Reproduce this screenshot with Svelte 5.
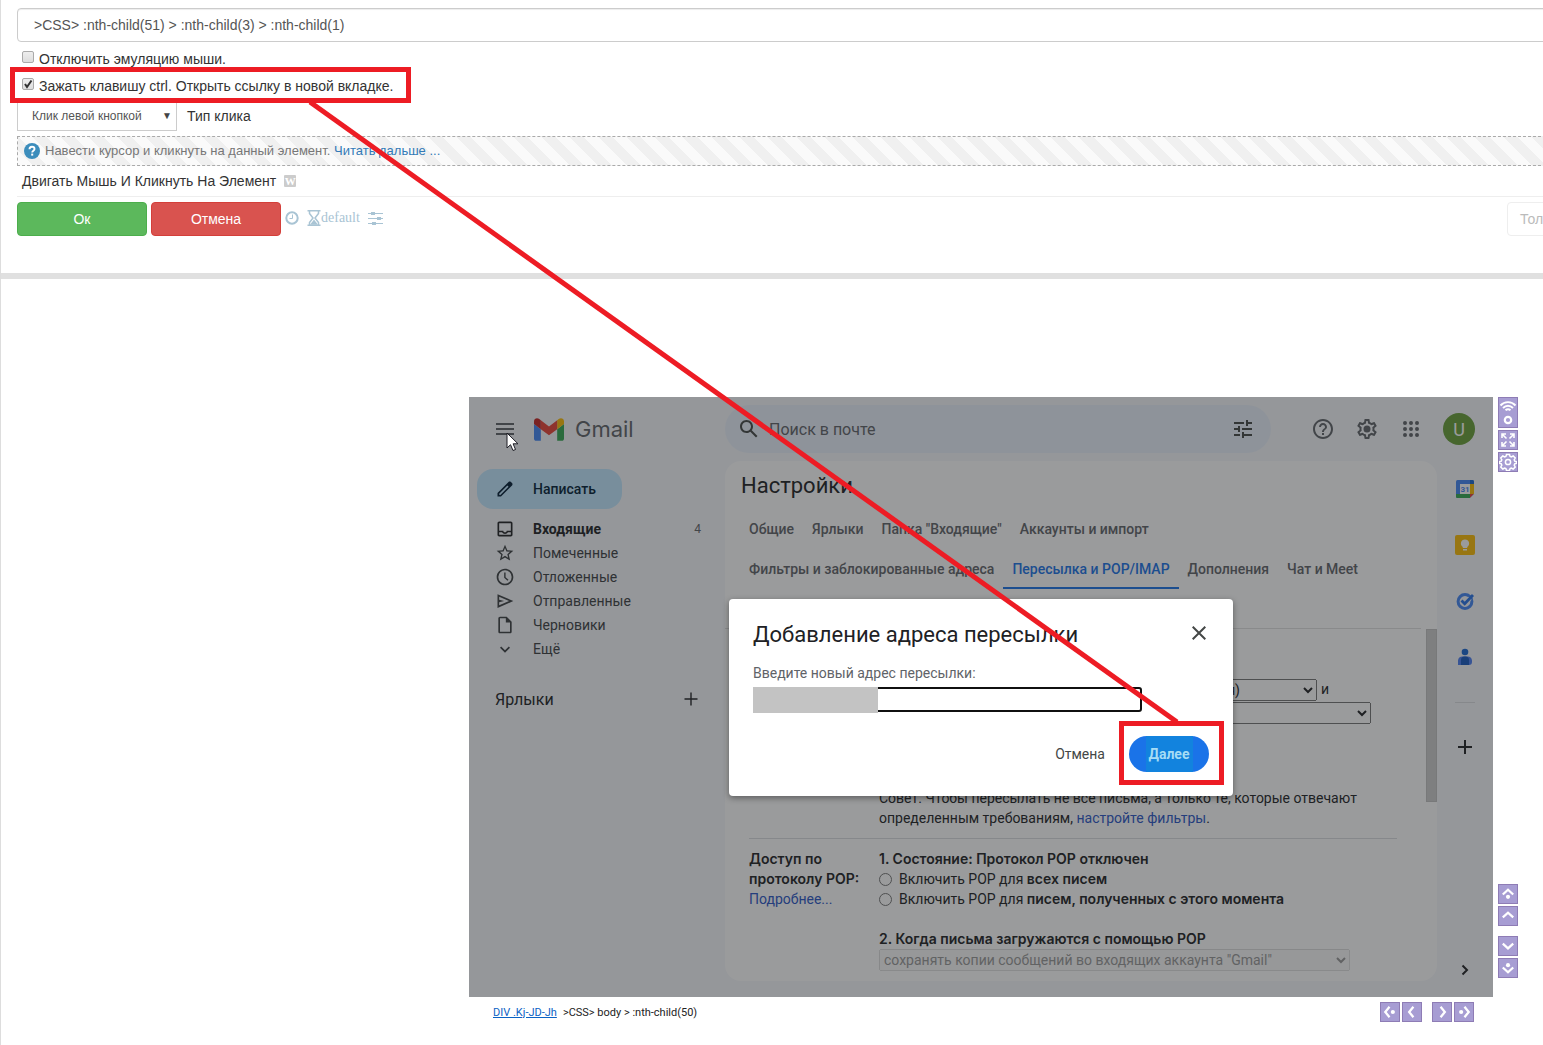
<script>
  let selector = $state('>CSS> :nth-child(51) > :nth-child(3) > :nth-child(1)');
  let noMouse = $state(false);
  let holdCtrl = $state(true);
  let address = $state('');

  const icons = {
    menu: 'M3 18h18v-2H3v2zm0-5h18v-2H3v2zm0-7v2h18V6H3z',
    search: 'M20.49 19l-5.73-5.73C15.53 12.2 16 10.91 16 9.5 16 5.91 13.09 3 9.5 3S3 5.91 3 9.5 5.91 16 9.5 16c1.41 0 2.7-.47 3.77-1.24L19 20.49 20.49 19zM5 9.5C5 7.01 7.01 5 9.5 5S14 7.01 14 9.5 11.99 14 9.5 14 5 11.99 5 9.5z',
    tune: 'M3 17v2h6v-2H3zM3 5v2h10V5H3zm10 16v-2h8v-2h-8v-2h-2v6h2zM7 9v2H3v2h4v2h2V9H7zm14 4v-2H11v2h10zm-6-4h2V7h4V5h-4V3h-2v6z',
    help: 'M11 18h2v-2h-2v2zm1-16C6.48 2 2 6.48 2 12s4.48 10 10 10 10-4.48 10-10S17.52 2 12 2zm0 18c-4.41 0-8-3.59-8-8s3.59-8 8-8 8 3.59 8 8-3.59 8-8 8zm0-14c-2.21 0-4 1.79-4 4h2c0-1.1.9-2 2-2s2 .9 2 2c0 2-3 1.75-3 5h2c0-2.25 3-2.5 3-5 0-2.21-1.79-4-4-4z',
    gear: 'M19.43 12.98c.04-.32.07-.64.07-.98 0-.34-.03-.66-.07-.98l2.11-1.65c.19-.15.24-.42.12-.64l-2-3.46c-.09-.16-.26-.25-.44-.25-.06 0-.12.01-.17.03l-2.49 1c-.52-.4-1.08-.73-1.69-.98l-.38-2.65C14.46 2.18 14.25 2 14 2h-4c-.25 0-.46.18-.49.42l-.38 2.65c-.61.25-1.17.59-1.69.98l-2.49-1c-.06-.02-.12-.03-.18-.03-.17 0-.34.09-.43.25l-2 3.46c-.13.22-.07.49.12.64l2.11 1.65c-.04.32-.07.65-.07.98 0 .33.03.66.07.98l-2.11 1.65c-.19.15-.24.42-.12.64l2 3.46c.09.16.26.25.44.25.06 0 .12-.01.17-.03l2.49-1c.52.4 1.08.73 1.69.98l.38 2.65c.03.24.24.42.49.42h4c.25 0 .46-.18.49-.42l.38-2.65c.61-.25 1.17-.59 1.69-.98l2.49 1c.06.02.12.03.18.03.17 0 .34-.09.43-.25l2-3.46c.12-.22.07-.49-.12-.64l-2.11-1.65zm-1.98-1.71c.04.31.05.52.05.73 0 .21-.02.43-.05.73l-.14 1.13.89.7 1.08.84-.7 1.21-1.27-.51-1.04-.42-.9.68c-.43.32-.84.56-1.25.73l-1.06.43-.16 1.13-.2 1.35h-1.4l-.19-1.35-.16-1.13-1.06-.43c-.43-.18-.83-.41-1.23-.71l-.91-.7-1.06.43-1.27.51-.7-1.21 1.08-.84.89-.7-.14-1.13c-.03-.31-.05-.54-.05-.74s.02-.43.05-.73l.14-1.13-.89-.7-1.08-.84.7-1.21 1.27.51 1.04.42.9-.68c.43-.32.84-.56 1.25-.73l1.06-.43.16-1.13.2-1.35h1.39l.19 1.35.16 1.13 1.06.43c.43.18.83.41 1.23.71l.91.7 1.06-.43 1.27-.51.7 1.21-1.07.85-.89.7.14 1.13zM12 8.5a3.5 3.5 0 1 0 0 7 3.5 3.5 0 0 0 0-7z',
    apps: 'M6 8a2 2 0 1 0 0-4 2 2 0 0 0 0 4zm6 0a2 2 0 1 0 0-4 2 2 0 0 0 0 4zm6 0a2 2 0 1 0 0-4 2 2 0 0 0 0 4zM6 14a2 2 0 1 0 0-4 2 2 0 0 0 0 4zm6 0a2 2 0 1 0 0-4 2 2 0 0 0 0 4zm6 0a2 2 0 1 0 0-4 2 2 0 0 0 0 4zM6 20a2 2 0 1 0 0-4 2 2 0 0 0 0 4zm6 0a2 2 0 1 0 0-4 2 2 0 0 0 0 4zm6 0a2 2 0 1 0 0-4 2 2 0 0 0 0 4z',
    pencil: 'M20.41 4.94l-1.35-1.35c-.78-.78-2.05-.78-2.83 0L3 16.82V21h4.18L20.41 7.77c.79-.78.79-2.05 0-2.83zm-14 14.12L5 19v-1.36l9.82-9.82 1.41 1.41-9.82 9.83z',
    inbox: 'M19 3H5c-1.1 0-2 .9-2 2v14c0 1.1.9 2 2 2h14c1.1 0 2-.9 2-2V5c0-1.1-.9-2-2-2zM5 19v-3h3.56c.69 1.19 1.97 2 3.45 2s2.75-.81 3.45-2H19v3H5zm14-5h-4.99c0 1.1-.9 2-2 2s-2-.9-2-2H5V5h14v9z',
    star: 'M22 9.24l-7.19-.62L12 2 9.19 8.63 2 9.24l5.46 4.73L5.82 21 12 17.27 18.18 21l-1.63-7.03L22 9.24zM12 15.4l-3.76 2.27 1-4.28-3.32-2.88 4.38-.38L12 6.1l1.71 4.04 4.38.38-3.32 2.88 1 4.28L12 15.4z',
    clock: 'M11.99 2C6.47 2 2 6.48 2 12s4.47 10 9.99 10C17.52 22 22 17.52 22 12S17.52 2 11.99 2zM12 20a8 8 0 1 1 0-16 8 8 0 0 1 0 16zM12.7 6.5H11V13l4 3.6 1.2-1.3-3.5-3.1V6.5z',
    send: 'M3 4v16.5L22 12 3 4zm2 12v-2.5l6-1.5-6-1.5V7l11.9 5L5 17.2V16z',
    draft: 'M14 2H6c-1.1 0-2 .9-2 2v16c0 1.1.9 2 2 2h12c1.1 0 2-.9 2-2V8l-6-6zM6 20V4h7v5h5v11H6z',
    more: 'M12 16.4l-6-6L7.4 9l4.6 4.6L16.6 9l1.4 1.4-6 6z'
  };

  const folders = [
    { label: 'Входящие', icon: icons.inbox, count: 4, bold: true },
    { label: 'Помеченные', icon: icons.star },
    { label: 'Отложенные', icon: icons.clock },
    { label: 'Отправленные', icon: icons.send },
    { label: 'Черновики', icon: icons.draft },
    { label: 'Ещё', icon: icons.more }
  ];

  const tabRows = [
    ['Общие', 'Ярлыки', 'Папка "Входящие"', 'Аккаунты и импорт'],
    ['Фильтры и заблокированные адреса', 'Пересылка и POP/IMAP', 'Дополнения', 'Чат и Meet']
  ];
  let activeTab = $state('Пересылка и POP/IMAP');

  // chevron + optional dot for the scroll buttons round the screen
  const vertical = [
    { name: 'В начало', d: 'M4 10l5.5-5 5.5 5', dot: [9.5, 12.5] },
    { name: 'Вверх', d: 'M4 11l5.5-5 5.5 5' },
    { name: 'Вниз', d: 'M4 7l5.5 5 5.5-5', gap: true },
    { name: 'В конец', d: 'M4 9l5.5 5 5.5-5', dot: [9.5, 6.5] }
  ];
  const horizontal = [
    { name: 'Влево до края', d: 'M9 4L4.5 9.5 9 15', dot: [12.5, 9.5] },
    { name: 'Влево', d: 'M11 4L6.5 9.5 11 15' },
    { name: 'Вправо', d: 'M8 4l4.5 5.5L8 15', gap: true },
    { name: 'Вправо до края', d: 'M10 4l4.5 5.5L10 15', dot: [6.5, 9.5] }
  ];
</script>

{#snippet icon(d, size = 20)}
  <svg class="icon" width={size} height={size} viewBox="0 0 24 24" aria-hidden="true"><path {d} /></svg>
{/snippet}

{#snippet padButton(b)}
  <button class="pad" class:gap={b.gap} aria-label={b.name}>
    <svg width="18" height="18" viewBox="0 0 19 19">
      <path d={b.d} fill="none" stroke="#fff" stroke-width="2.4" />
      {#if b.dot}<circle cx={b.dot[0]} cy={b.dot[1]} r="2.2" fill="#fff" />{/if}
    </svg>
  </button>
{/snippet}

<div class="page">
  <section class="action">
    <input class="selector" type="text" aria-label="Селектор" bind:value={selector} />

    <label class="check">
      <span class="tick">
        <input type="checkbox" bind:checked={noMouse} />
        {#if noMouse}<svg viewBox="0 0 12 12"><path d="M3 6l2 3 4.5-6.5" /></svg>{/if}
      </span>
      Отключить эмуляцию мыши.
    </label>
    <label class="check">
      <span class="tick">
        <input type="checkbox" bind:checked={holdCtrl} />
        {#if holdCtrl}<svg viewBox="0 0 12 12"><path d="M3 6l2 3 4.5-6.5" /></svg>{/if}
      </span>
      Зажать клавишу ctrl. Открыть ссылку в новой вкладке.
    </label>

    <div class="click-type">
      <span class="select-wrap">
        <select id="click-type"><option>Клик левой кнопкой</option></select>
        <span class="arrow">▼</span>
      </span>
      <label for="click-type">Тип клика</label>
    </div>

    <div class="hint">
      <svg width="16" height="16" viewBox="0 0 16 16" aria-hidden="true">
        <circle cx="8" cy="8" r="8" fill="#3c8dbc" />
        <path d="M5.5 6.3C5.5 4.5 6.6 3.7 8 3.7s2.5.8 2.5 2.2c0 1.7-2.3 1.8-2.3 3.6" fill="none" stroke="#fff" stroke-width="1.9" />
        <rect x="7.2" y="10.6" width="2" height="2" fill="#fff" />
      </svg>
      <span>Навести курсор и кликнуть на данный элемент. <a href="#more">Читать дальше ...</a></span>
    </div>

    <div class="name">
      Двигать Мышь И Кликнуть На Элемент
      <span class="wiki">W</span>
    </div>

    <div class="buttons">
      <button class="btn ok">Ок</button>
      <button class="btn cancel">Отмена</button>
      <div class="timing">
        <svg width="14" height="14" viewBox="0 0 14 14">
          <circle cx="7" cy="7" r="5.7" fill="none" stroke="currentColor" stroke-width="2" />
          <path d="M7.5 3.5V7.5H4.5" fill="none" stroke="currentColor" />
        </svg>
        <span class="wait">
          <svg width="14" height="16" viewBox="0 0 13 16">
            <path d="M0 .8h13M0 15.2h13M2 1v2.5L5.5 8 2 12.5V15M11 1v2.5L7.5 8 11 12.5V15" fill="none" stroke="currentColor" stroke-width="1.5" />
            <path d="M2.5 14.8L6.5 9.5l4 5.3z" fill="currentColor" />
          </svg>default
        </span>
        <svg width="15" height="14" viewBox="0 0 15 14">
          <path d="M0 2.5h15M0 7.5h15M0 12.5h15" stroke="currentColor" />
          <path d="M3 1h4v3H3zM9 6h4v3H9zM4 11h4v3H4z" fill="currentColor" />
        </svg>
      </div>
      <button class="btn only">Только</button>
    </div>
  </section>

  <main class="stage">
    <div class="screen-col">
      <div class="screen">
        <header class="top">
          <div class="brand">
            <button class="plain" aria-label="Меню">{@render icon(icons.menu, 24)}</button>
            <svg width="30" height="23" viewBox="52 42 88 66" aria-hidden="true">
              <path fill="#4285f4" d="M58 108h14V74L52 59v43c0 3.32 2.69 6 6 6" />
              <path fill="#34a853" d="M120 108h14c3.32 0 6-2.69 6-6V59l-20 15" />
              <path fill="#fbbc04" d="M120 48v26l20-15v-8c0-7.42-8.47-11.65-14.4-7.2" />
              <path fill="#ea4335" d="M72 74V48l24 18 24-18v26L96 92" />
              <path fill="#c5221f" d="M52 51v8l20 15V48l-5.6-4.2c-5.94-4.45-14.4-.22-14.4 7.2" />
            </svg>
            <span class="brand-name">Gmail</span>
          </div>
          <div class="search">
            {@render icon(icons.search, 24)}
            <input type="text" placeholder="Поиск в почте" aria-label="Поиск в почте" />
            {@render icon(icons.tune, 24)}
          </div>
          <div class="tools">
            <button class="plain" aria-label="Справка">{@render icon(icons.help, 24)}</button>
            <button class="plain" aria-label="Настройки">{@render icon(icons.gear, 24)}</button>
            <button class="plain" aria-label="Приложения">{@render icon(icons.apps, 24)}</button>
            <button class="avatar">U</button>
          </div>
        </header>

        <div class="body">
          <nav class="folders">
            <button class="compose">{@render icon(icons.pencil)}Написать</button>
            {#each folders as f}
              <a class="folder" class:bold={f.bold} href="#folder">
                {@render icon(f.icon)}
                <span>{f.label}</span>
                {#if f.count}<span class="count">{f.count}</span>{/if}
              </a>
            {/each}
            <div class="labels">
              <span>Ярлыки</span>
              <button class="plain" aria-label="Создать ярлык">
                <svg class="icon" width="14" height="14" viewBox="0 0 14 14"><path d="M6.3.5h1.4v5.8h5.8v1.4H7.7v5.8H6.3V7.7H.5V6.3h5.8z" /></svg>
              </button>
            </div>
          </nav>

          <section class="settings">
            <h1>Настройки</h1>
            {#each tabRows as row}
              <div class="tabs">
                {#each row as tab}
                  <button class="tab" class:active={tab === activeTab} onclick={() => (activeTab = tab)}>{tab}</button>
                {/each}
              </div>
            {/each}
            <div class="scroll">
              <div class="content">
                <div class="forwarding">
                  <div class="line"><select class="copy" aria-label="Адрес"><option>я)</option></select> и</div>
                  <div class="line"><select class="keep" aria-label="Действие"><option></option></select></div>
                  <p>Совет. Чтобы пересылать не все письма, а только те, которые отвечают определенным требованиям, <a href="#filters">настройте фильтры</a>.</p>
                </div>
                <div class="pop">
                  <div class="side"><b>Доступ по протоколу POP:</b><br /><a href="#pop">Подробнее...</a></div>
                  <div>
                    <b>1. Состояние: Протокол POP отключен</b>
                    <label class="radio"><input type="radio" name="pop" /><span>Включить POP для <b>всех писем</b></span></label>
                    <label class="radio"><input type="radio" name="pop" /><span>Включить POP для <b>писем, полученных с этого момента</b></span></label>
                    <label class="when" for="when"><b>2. Когда письма загружаются с помощью POP</b></label>
                    <select id="when" disabled><option>сохранять копии сообщений во входящих аккаунта "Gmail"</option></select>
                  </div>
                </div>
              </div>
              <div class="bar"></div>
            </div>
          </section>

          <aside class="addons">
            <svg width="20" height="20" viewBox="0 0 20 20">
              <rect x="1" y="1" width="18" height="18" rx="1.5" fill="#4285f4" />
              <path d="M1 15h14v4H2.5A1.5 1.5 0 0 1 1 17.5z" fill="#34a853" />
              <path d="M15 5h4v10h-4z" fill="#fbbc04" />
              <path d="M15 1h2.5A1.5 1.5 0 0 1 19 2.5V5h-4z" fill="#1967d2" />
              <path d="M15 15h4l-4 4z" fill="#ea4335" />
              <path d="M19 15v4h-4z" fill="#f6f8fc" />
              <path d="M5 5h10v10H5z" fill="#fff" />
              <text x="10" y="13" text-anchor="middle" font-size="8" font-weight="700" fill="#4285f4">31</text>
            </svg>
            <svg width="20" height="20" viewBox="0 0 20 20">
              <rect width="20" height="20" rx="2" fill="#fbbc04" />
              <path d="M10 4.5a4 4 0 0 0-2.2 7.4V13h4.4v-1.1A4 4 0 0 0 10 4.5zM8 14h4v1.5H8z" fill="#fff" />
            </svg>
            <svg width="20" height="20" viewBox="0 0 20 20">
              <circle cx="10" cy="10.5" r="6.9" fill="none" stroke="#4285f4" stroke-width="3" />
              <path d="M6.5 9.5l3.2 3.3L15 7.3" fill="none" stroke="#f6f8fc" stroke-width="4.5" />
              <path d="M6.5 9.5l3.2 3.3L18 4" fill="none" stroke="#2773e8" stroke-width="2.8" />
            </svg>
            <svg width="20" height="20" viewBox="0 0 20 20">
              <circle cx="10" cy="5" r="3.3" fill="#1967d2" />
              <path d="M3 18v-4.5A4.500 4.500 0 0 1 7.5 9.5h5a4.500 4.500 0 0 1 4.5 4V15a3 3 0 0 1-3 3z" fill="#4c7ef3" />
              <path d="M6 18v-5a3.5 3.5 0 0 1 3.5-3.5h1A3.5 3.5 0 0 1 14 13v5z" fill="#1558c0" />
            </svg>
            <hr />
            <svg width="20" height="20" viewBox="0 0 20 20"><path d="M9 2h2v6h6v2h-6v6H9v-6H3V8h6z" fill="#202124" /></svg>
            <svg class="collapse" width="20" height="20" viewBox="0 0 20 20"><path d="M7.5 6.5L12 11l-4.5 4.5" fill="none" stroke="#202124" stroke-width="2" /></svg>
          </aside>
        </div>

        <div class="scrim">
          <form class="dialog" onsubmit={(e) => e.preventDefault()}>
            <div class="dialog-head">
              <h2>Добавление адреса пересылки</h2>
              <button type="button" class="plain" aria-label="Закрыть">
                <svg width="14" height="14" viewBox="0 0 14 14"><path d="M.7.7l12.6 12.6M13.3.7L.7 13.3" stroke="#444746" stroke-width="2" /></svg>
              </button>
            </div>
            <label for="address">Введите новый адрес пересылки:</label>
            <div class="field">
              <input id="address" type="text" bind:value={address} />
              <span class="hidden-value"></span>
            </div>
            <div class="dialog-buttons">
              <button type="button" class="text-btn">Отмена</button>
              <button class="next"><span>Далее</span></button>
            </div>
          </form>
        </div>

        <svg class="cursor" width="13" height="20" viewBox="0 0 13 20">
          <path d="M1 1v15l3.5-3.3L7 18.5l2.5-1-2.4-5.7H12z" fill="#fff" stroke="#1c1c24" />
        </svg>
      </div>

      <footer class="status">
        <a href="#node">DIV .Kj-JD-Jh</a>
        <span>&gt;CSS&gt; body &gt; :nth-child(50)</span>
        <div class="pads">
          {#each horizontal as b}{@render padButton(b)}{/each}
        </div>
      </footer>
    </div>

    <div class="rail">
      <button class="pad tall" aria-label="Соединение">
        <svg width="18" height="29" viewBox="0 0 18 29" fill="none" stroke="#fff">
          <path d="M1.5 7.5c4-4.5 11-4.5 15 0M4 10c3-3 7-3 10 0M6.5 12.3c1.5-1.3 3.5-1.3 5 0" stroke-width="1.9" />
          <circle cx="9" cy="22" r="3.2" stroke-width="2.2" />
        </svg>
      </button>
      <button class="pad" aria-label="Развернуть">
        <svg width="18" height="18" viewBox="0 0 18 18" fill="none" stroke="#fff" stroke-width="1.6">
          <path d="M3 7V3h4M11 3h4v4M15 11v4h-4M7 15H3v-4M3 3l4.5 4.5M15 3l-4.5 4.5M15 15l-4.5-4.5M3 15l4.5-4.5" />
        </svg>
      </button>
      <button class="pad" aria-label="Параметры">
        <svg width="18" height="18" viewBox="0 0 18 18" fill="none" stroke="#fff" stroke-width="1.5">
          <path d="M7.5 1.5h3l.6 2 1.2.5 1.9-1 2 2-1 1.9.5 1.2 2 .6v1.6l-2 .6-.5 1.2 1 1.9-2 2-1.9-1-1.2.5-.6 2h-3l-.6-2-1.2-.5-1.9 1-2-2 1-1.9-.5-1.2-2-.6V8.7l2-.6.5-1.2-1-1.9 2-2 1.9 1 1.2-.5z" />
          <circle cx="9" cy="9" r="2.6" />
        </svg>
      </button>
      <div class="rail-bottom">
        {#each vertical as b}{@render padButton(b)}{/each}
      </div>
    </div>
  </main>

  <svg class="marks" aria-hidden="true">
    <rect x="12.5" y="69.5" width="396" height="31" />
    <rect x="1121.5" y="723.5" width="100" height="59" />
    <path d="M310 102L1177 722" />
  </svg>
</div>

<style>
  :global(body) {
    margin: 0;
    background: #fff;
  }

  .page {
    position: relative;
    box-sizing: border-box;
    min-height: 100vh;
    overflow: hidden;
    border-left: 1px solid #ddd;
    font-family: 'Liberation Sans', Arial, sans-serif;
    font-size: 14px;
    color: #333;
  }

  .page :global(*) {
    box-sizing: border-box;
  }

  button,
  input,
  select {
    font-family: inherit;
    font-size: inherit;
    margin: 0;
  }

  svg {
    display: block;
    flex-shrink: 0;
  }

  .icon {
    fill: currentColor;
  }

  /* action form */
  .action {
    padding: 8px 0 37px 16px;
    border-bottom: 6px solid #e0e0e0;
  }

  .selector {
    display: block;
    width: calc(100% + 8px);
    height: 34px;
    margin-bottom: 3px;
    padding: 6px 16px;
    border: 1px solid #ccc;
    border-radius: 4px;
    box-shadow: inset 0 1px 1px rgba(0, 0, 0, 0.075);
    color: #555;
  }

  .check {
    display: flex;
    align-items: center;
    gap: 5px;
    height: 27px;
    padding-left: 5px;
  }

  .tick {
    position: relative;
    height: 16px;
  }

  .tick input {
    display: block;
    appearance: none;
    width: 12px;
    height: 12px;
    border: 1px solid #aaa;
    border-radius: 2px;
    background: linear-gradient(#eee, #ddd);
  }

  .tick svg {
    position: absolute;
    top: 0;
    left: 0;
    width: 12px;
    height: 12px;
    fill: none;
    stroke: #333;
    stroke-width: 2;
    pointer-events: none;
  }

  .click-type {
    display: flex;
    align-items: center;
    gap: 10px;
    height: 33px;
  }

  .select-wrap {
    position: relative;
  }

  .select-wrap select {
    appearance: none;
    width: 160px;
    height: 31px;
    padding: 0 14px;
    border: 1px solid #ccc;
    background: #fff;
    color: #555;
    font-size: 12px;
  }

  .arrow {
    position: absolute;
    right: 5px;
    top: 10px;
    font-size: 10px;
    color: #444;
    pointer-events: none;
  }

  .hint {
    display: flex;
    align-items: center;
    gap: 5px;
    height: 30px;
    margin: 4px -8px 0 0;
    padding: 0 0 1px 6px;
    border: 1px dashed #aaa;
    background: repeating-linear-gradient(45deg, #fafafa 0 10px, #f0f0f0 10px 20px);
    color: #777;
    font-size: 13px;
  }

  .hint a {
    color: #337ab7;
    text-decoration: none;
  }

  .name {
    display: flex;
    align-items: center;
    gap: 8px;
    height: 31px;
    padding-left: 5px;
    border-bottom: 1px solid #eee;
  }

  .wiki {
    width: 12px;
    height: 12px;
    border-radius: 1px;
    background: #ccc;
    color: #fff;
    font: bold 11px/12px 'Liberation Serif', serif;
    text-align: center;
  }

  .buttons {
    display: flex;
    gap: 4px;
    margin-top: 5px;
  }

  .btn {
    height: 34px;
    width: 130px;
    border: 1px solid;
    border-radius: 4px;
    color: #fff;
  }

  .ok {
    background: #5cb85c;
    border-color: #4cae4c;
  }

  .cancel {
    background: #d9534f;
    border-color: #d43f3a;
  }

  .only {
    width: 80px;
    margin: 0 -44px 0 auto;
    padding: 0 12px;
    background: #fff;
    border-color: #eee;
    color: #bbb;
    text-align: left;
  }

  .timing {
    display: flex;
    align-items: center;
    gap: 8px;
    height: 31px;
    color: #a9c4d4;
    font: 14px 'Liberation Serif', serif;
  }

  .wait {
    display: flex;
    align-items: center;
  }

  /* remote screen */
  .stage {
    display: flex;
    justify-content: flex-end;
    gap: 5px;
    padding: 118px 25px 0;
  }

  .screen-col {
    flex: 0 1 1024px;
    min-width: 0;
  }

  .screen {
    position: relative;
    display: flex;
    flex-direction: column;
    height: 600px;
    overflow: hidden;
    background: #f6f8fc;
    color: #202124;
    font-family: Roboto, sans-serif;
  }

  .plain {
    display: flex;
    align-items: center;
    justify-content: center;
    padding: 0;
    border: 0;
    background: none;
    color: inherit;
  }

  .top {
    display: flex;
    align-items: center;
    height: 64px;
    color: #5f6368;
  }

  .brand {
    display: flex;
    align-items: center;
    width: 256px;
    padding-left: 24px;
  }

  .brand > svg {
    margin: 0 11px 0 17px;
  }

  .brand-name {
    font-family: Inter, sans-serif;
    font-size: 22px;
  }

  .search {
    display: flex;
    align-items: center;
    flex: 1;
    height: 48px;
    padding: 0 16px 0 12px;
    gap: 8px;
    border-radius: 24px;
    background: #eaf1fb;
    color: #444746;
  }

  .search input {
    flex: 1;
    min-width: 0;
    padding: 0;
    border: 0;
    background: none;
    font-size: 16px;
  }

  .search input::placeholder {
    color: #5f6368;
  }

  .tools {
    display: flex;
    align-items: center;
    gap: 20px;
    padding: 0 18px 0 40px;
  }

  .avatar {
    width: 32px;
    height: 32px;
    padding: 0;
    border: 0;
    border-radius: 50%;
    background: #689f38;
    color: #fff;
    font-size: 18px;
  }

  .body {
    display: flex;
    flex: 1;
    min-height: 0;
  }

  .folders {
    width: 256px;
    padding: 8px 24px 0 8px;
    font-size: 14px;
  }

  .compose {
    display: flex;
    align-items: center;
    gap: 18px;
    height: 40px;
    margin-bottom: 8px;
    padding: 0 26px 0 18px;
    border: 0;
    border-radius: 16px;
    background: #c2e7ff;
    color: #001d35;
    font-weight: 500;
  }

  .folder {
    display: flex;
    align-items: center;
    gap: 18px;
    height: 24px;
    padding-left: 18px;
    color: #3c4043;
    text-decoration: none;
  }

  .bold {
    font-weight: 700;
    color: #202124;
  }

  .count {
    margin-left: auto;
    color: #5f6368;
    font-size: 12px;
    font-weight: 400;
  }

  .labels {
    display: flex;
    align-items: center;
    justify-content: space-between;
    margin-top: 26px;
    padding: 0 3px 0 18px;
    height: 24px;
    font-size: 16px;
  }

  .settings {
    flex: 1;
    display: flex;
    flex-direction: column;
    min-width: 0;
    margin-bottom: 16px;
    border-radius: 16px;
    background: #fff;
    overflow: hidden;
  }

  h1 {
    height: 48px;
    margin: 0;
    padding: 0 16px;
    font-size: 22px;
    font-weight: 400;
    line-height: 50px;
  }

  .tabs {
    display: flex;
    height: 40px;
    padding: 0 15px;
  }

  .tab {
    flex-shrink: 0;
    padding: 2px 9px 0;
    border: 0;
    border-bottom: 2px solid transparent;
    background: none;
    color: #5f6368;
    font-weight: 500;
    white-space: nowrap;
  }

  .active {
    border-color: #1a73e8;
    color: #1a73e8;
  }

  .scroll {
    display: flex;
    flex: 1;
    min-height: 0;
    margin-top: 39px;
    line-height: 20px;
  }

  .content {
    flex: 1;
    min-width: 0;
    margin-right: 5px;
    padding: 50px 24px 0;
    border-top: 1px solid #e0e0e0;
    overflow: hidden;
  }

  .content a {
    color: #2a56c6;
    text-decoration: none;
  }

  .bar {
    width: 11px;
    height: 173px;
    margin-top: 1px;
    border: 1px solid #c1c1c1;
    background: #cdcdcd;
  }

  .forwarding {
    padding: 0 0 10px 130px;
    border-bottom: 1px solid #dadce0;
  }

  .line {
    display: flex;
    gap: 4px;
    height: 23px;
  }

  .content select {
    height: 22px;
    color: #202124;
  }

  .copy {
    width: 438px;
    padding-right: 60px;
    text-align-last: right;
  }

  .keep {
    width: 492px;
  }

  .forwarding p {
    margin: 63px 0 0;
  }

  .pop {
    display: flex;
    padding-top: 10px;
  }

  .side {
    flex: 0 0 130px;
  }

  .pop b {
    font-family: Inter, sans-serif;
    font-weight: 600;
  }

  .radio {
    display: flex;
    align-items: center;
    gap: 7px;
    height: 20px;
  }

  .radio input {
    width: 13px;
    height: 13px;
  }

  .when {
    display: block;
    margin-top: 20px;
  }

  .content #when {
    width: 471px;
    color: #6d6d6d;
  }

  .addons {
    display: flex;
    flex-direction: column;
    align-items: center;
    gap: 36px;
    width: 56px;
    padding: 18px 0;
  }

  .addons hr {
    width: 20px;
    margin: -1px 0;
    border: 0;
    border-top: 1px solid #dadce0;
  }

  .addons .collapse {
    margin-top: auto;
  }

  .scrim {
    position: absolute;
    inset: 0;
    display: flex;
    align-items: center;
    justify-content: center;
    background: rgba(32, 33, 36, 0.45);
  }

  .dialog {
    width: 504px;
    padding: 24px;
    border-radius: 4px;
    background: #fff;
    box-shadow: 0 2px 6px rgba(0, 0, 0, 0.4);
  }

  .dialog-head {
    display: flex;
    align-items: center;
    justify-content: space-between;
    height: 24px;
    padding-right: 3px;
  }

  .dialog-head .plain {
    padding-bottom: 4px;
  }

  h2 {
    margin: 0;
    font-size: 22px;
    font-weight: 400;
    white-space: nowrap;
  }

  .dialog label {
    display: block;
    margin-top: 16px;
    color: #5f6368;
    line-height: 20px;
  }

  .field {
    position: relative;
    margin-top: 4px;
    height: 25px;
  }

  .field input {
    width: 389px;
    height: 25px;
    border: 2px solid #101010;
    border-radius: 3px;
    outline: 0;
  }

  .hidden-value {
    position: absolute;
    top: 0;
    left: 0;
    width: 125px;
    height: 26px;
    background: #c3c3c3;
  }

  .dialog-buttons {
    display: flex;
    justify-content: flex-end;
    gap: 8px;
    margin-top: 24px;
  }

  .text-btn {
    padding: 0 16px;
    border: 0;
    background: none;
    color: #444746;
  }

  .next {
    display: flex;
    justify-content: center;
    width: 80px;
    height: 36px;
    padding: 0;
    border: 0;
    border-radius: 18px;
    overflow: hidden;
    background: #1a73e8;
    color: #a5dcf5;
    font-weight: 700;
    line-height: 36px;
  }

  .next span {
    padding: 0 3px;
    background: #1283de;
  }

  .cursor {
    position: absolute;
    top: 35px;
    left: 37px;
  }

  .status {
    display: flex;
    align-items: center;
    gap: 6px;
    margin-top: 5px;
    padding: 0 19px 0 24px;
    color: #222;
    font: 11px Roboto, sans-serif;
  }

  .status a {
    color: #0b62c4;
  }

  .pads {
    display: flex;
    gap: 2px;
    margin-left: auto;
  }

  .pad {
    width: 20px;
    height: 20px;
    padding: 0;
    border: 1px solid #8e7cb5;
    background: #a79dd3;
  }

  .tall {
    height: 31px;
  }

  .rail {
    display: flex;
    flex-direction: column;
    gap: 2px;
    height: 581px;
  }

  .rail-bottom {
    display: flex;
    flex-direction: column;
    gap: 2px;
    margin-top: auto;
  }

  .pads .gap {
    margin-left: 8px;
  }

  .rail-bottom .gap {
    margin-top: 8px;
  }

  /* red pointers over the form and the screen */
  .marks {
    position: absolute;
    inset: 0;
    left: -1px;
    width: 100%;
    height: 100%;
    fill: none;
    stroke: #ed1c24;
    stroke-width: 5;
    pointer-events: none;
  }
</style>
